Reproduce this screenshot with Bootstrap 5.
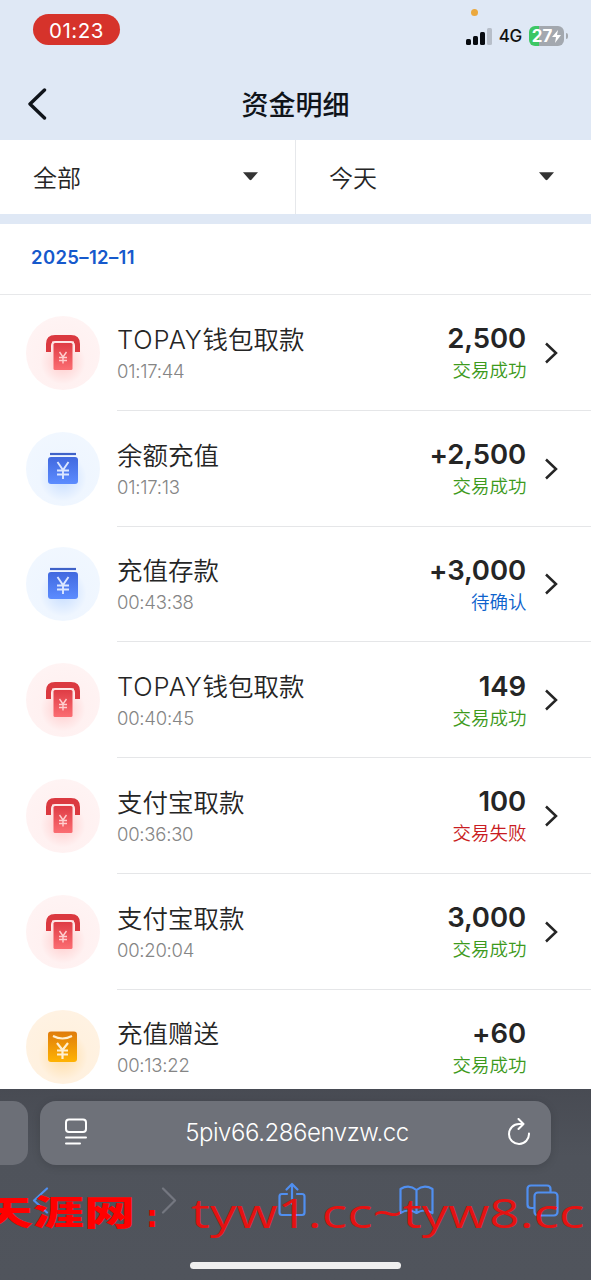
<!DOCTYPE html>
<html lang="zh-CN">
<head>
<meta charset="utf-8">
<meta name="viewport" content="width=device-width, initial-scale=1">
<title>资金明细</title>
<link href="https://cdn.jsdelivr.net/npm/bootstrap@5.3.0/dist/css/bootstrap.min.css" rel="stylesheet">
<style>
body{font-family:Inter,"Noto Sans CJK SC",sans-serif;color:#252525;background:#fff;line-height:1}
.screen{width:591px;height:1280px}
.tinted{background:#dfe8f5}
.statusbar{height:69px;padding:14px 23px 0 33px}
.clock{width:87px;height:31px;background:#d6332b;font-size:20.5px;line-height:33px;letter-spacing:.5px;color:#fff}
.signal-area{padding-top:12px;gap:7px}
.network{font-size:17px;font-weight:500;color:#111;letter-spacing:-.3px}
.battery{width:35px;height:20px;border-radius:6px;background:linear-gradient(90deg,#3dc764 10px,#a3a8af 10px);font-size:17px;color:#fff}
.battery-tip{width:2px;height:6px;background:#a3a8af;margin-left:-5px}
.privacy-dot{width:7px;height:7px;background:#eba83d;left:471px;top:9px}
.titlebar{height:71px}
.titlebar h1{font-size:27px;font-weight:500;color:#10141a;padding-top:3px}
.back{left:26px;top:19px}
.filters{height:74px;font-size:24px;font-weight:350}
.filter{padding:3px 37px 0 33px;width:295px}
.filter span{padding-top:1px}
.filter svg{margin-top:-4px}
.filter+.filter{border-left:1px solid #e6e8eb;width:296px}
.gapline{height:10px}
.day{height:71px;padding:0 31px 3px;font-size:18.5px;font-weight:600;letter-spacing:.35px;color:#1659cc;border-bottom:1px solid #e7e8ea}
.list-area{height:794px}
.record{height:115.75px;padding-left:26px}
.disc{width:74px;height:74px;margin-right:17px}
.disc-red{background:radial-gradient(circle at 50% 62%,#ffcaca 0,#fff1f1 38%,#fff5f5 100%)}
.disc-blue{background:radial-gradient(circle at 50% 62%,#c5dcff 0,#eff6ff 40%,#f2f8ff 100%)}
.disc-gold{background:radial-gradient(circle at 50% 62%,#ffdca4 0,#fff1df 42%,#fff3e5 100%)}
.record-line{height:100%;border-bottom:1px solid #e5e6e8;padding-right:32px}
.name{font-size:25.5px;line-height:30px;font-weight:350;padding-top:2px}
.name .latin{letter-spacing:.9px;margin-right:-.3px}
.time{font-size:18.5px;line-height:22px;color:#858585;font-weight:350;letter-spacing:-.25px;margin-top:5px}
.amount{font-size:27.5px;line-height:30px;font-weight:600;letter-spacing:-.1px}
.state{font-size:18.5px;line-height:22px;font-weight:350;margin-top:6px;margin-right:-.5px}
.ok{color:#3d9a1c}.wait{color:#0d62cc}.fail{color:#c91c22}
.arrow{margin-left:18px;margin-top:1px}
.browser{height:192px;background:linear-gradient(#484b53,#4f535b 35%,#50545c)}
.urlrow{padding-top:12px;gap:12px}
.tab-prev{width:28px;height:64px;background:#6c6f77;border-radius:0 15px 15px 0}
.urlbox{width:511px;height:64px;background:#6e7179;border-radius:16px;padding:0 20px 0 25px;color:#fff;font-size:24px;box-shadow:0 2px 8px #0002}
.urlbox svg{margin-top:-2px}
.url{letter-spacing:-.45px;font-weight:350}
.toolbar{height:72px;padding:0 32px 2px 31px}
.toolbar svg{flex:none}
.tool-forward{margin-left:111px}
.tool-book{margin-left:93px}
.tool-tabs{margin-left:92px}
.home{width:211px;height:7px;background:#efefef;margin-top:25px}
.stamp{color:#f00;white-space:nowrap;transform-origin:0 0}
.stamp-cn{left:-18px;top:102px;font:900 34px/40px "Noto Sans CJK SC",sans-serif;transform:scaleX(1.5)}
.stamp-dots{left:146px;top:108px;font:700 30px/40px "DejaVu Sans",sans-serif}
.stamp-en{left:191px;top:99px;font:400 40px/50px "Open Sans","Noto Sans",sans-serif;color:#e51212;transform:scaleX(1.325)}
</style>
</head>
<body>
<svg width="0" height="0" class="position-absolute" aria-hidden="true">
<defs>
<linearGradient id="gr" x1="0" y1="0" x2="0" y2="1"><stop stop-color="#df3c45"/><stop offset="1" stop-color="#fb6d72"/></linearGradient>
<linearGradient id="gb" x1="0" y1="0" x2="0" y2="1"><stop stop-color="#4169df"/><stop offset="1" stop-color="#5c8cff"/></linearGradient>
<linearGradient id="gg" x1="0" y1="0" x2="0" y2="1"><stop stop-color="#df7c0c"/><stop offset="1" stop-color="#ffb303"/></linearGradient>
</defs>
<symbol id="withdraw" viewBox="0 0 74 74">
<path d="M20 36v-8q0-9 9-9h16q9 0 9 9v8h-5v-6q0-5-5-5H30q-5 0-5 5v6z" fill="#db3940"/>
<rect x="26" y="25.500" width="22" height="12" fill="#fde3e3"/>
<rect x="27.500" y="27" width="19" height="27" rx="1.500" fill="url(#gr)"/>
<path d="M33.500 36l3.500 5 3.500-5M37 41v6.500M33 41.500h8M33 44.500h8" fill="none" stroke="#ffd0d0" stroke-width="1.400"/>
</symbol>
<symbol id="deposit" viewBox="0 0 74 74">
<path d="M24 22h26" stroke="#3f62c8" stroke-width="2.200"/>
<rect x="22" y="25" width="30" height="27" rx="3" fill="url(#gb)"/>
<path d="M31.500 30l5.500 8 5.500-8M37 38v9M31 38.500h12M31 42.500h12" fill="none" stroke="#dce7ff" stroke-width="1.900"/>
</symbol>
<symbol id="bonus" viewBox="0 0 74 74">
<rect x="22" y="21.500" width="29" height="30.500" rx="3" fill="url(#gg)"/>
<path d="M27 26q9.500 5 19 0" fill="none" stroke="#fff0d2" stroke-width="2"/>
<path d="M31 33l5.500 7 5.500-7M36.500 40v9M31 40.500h11M31 44.500h11" fill="none" stroke="#fff0d2" stroke-width="2.200"/>
</symbol>
<symbol id="chev" viewBox="0 0 15 22"><path d="M2 1.500l10 9.500L2 20.500" fill="none" stroke="#252525" stroke-width="2.500"/></symbol>
<symbol id="caret" viewBox="0 0 16 9"><path d="M0 0h16L9 8q-1 1-2 0z" fill="#333"/></symbol>
</svg>

<main class="screen position-relative overflow-hidden">
<header class="tinted position-relative">
  <div class="statusbar d-flex justify-content-between align-items-start">
    <div class="clock rounded-pill text-center">01:23</div>
    <div class="signal-area d-flex align-items-center">
      <svg width="26" height="17"><g fill="#080b10"><rect y="11" width="5" height="6" rx="1.500"/><rect x="7" y="8" width="5" height="9" rx="1.500"/><rect x="14" y="4" width="5" height="13" rx="1.500"/></g><rect x="21" width="5" height="17" rx="1.500" fill="#b7bec9"/></svg>
      <span class="network">4G</span>
      <div class="battery d-flex align-items-center justify-content-center fw-bold">27<svg width="9" height="13" viewBox="0 0 9 13"><path d="M6 0L0 7h4l-1 6 6-8H5z" fill="#fff"/></svg></div>
      <i class="battery-tip rounded-end"></i>
    </div>
  </div>
  <span class="privacy-dot rounded-circle position-absolute"></span>
  <div class="titlebar position-relative d-flex align-items-center justify-content-center">
    <svg class="back position-absolute" width="22" height="32"><path d="M18.500 2L4 16l14.500 14" fill="none" stroke="#10141a" stroke-width="3.400" stroke-linecap="round" stroke-linejoin="round"/></svg>
    <h1 class="m-0">资金明细</h1>
  </div>
</header>
<nav class="filters d-flex">
  <div class="filter d-flex align-items-center justify-content-between"><span>全部</span><svg width="15" height="9"><use href="#caret"/></svg></div>
  <div class="filter d-flex align-items-center justify-content-between"><span>今天</span><svg width="15" height="9"><use href="#caret"/></svg></div>
</nav>
<div class="gapline tinted"></div>
<div class="day d-flex align-items-center">2025–12–11</div>
<section class="list-area overflow-hidden">
  <article class="record d-flex align-items-center"><div class="disc disc-red rounded-circle flex-shrink-0"><svg width="74" height="74"><use href="#withdraw"/></svg></div><div class="record-line d-flex align-items-center flex-grow-1"><div class="flex-grow-1"><div class="name"><span class="latin">TOPAY</span>钱包取款</div><div class="time">01:17:44</div></div><div class="text-end"><div class="amount">2,500</div><div class="state ok">交易成功</div></div><svg class="arrow" width="15" height="22"><use href="#chev"/></svg></div></article>
  <article class="record d-flex align-items-center"><div class="disc disc-blue rounded-circle flex-shrink-0"><svg width="74" height="74"><use href="#deposit"/></svg></div><div class="record-line d-flex align-items-center flex-grow-1"><div class="flex-grow-1"><div class="name">余额充值</div><div class="time">01:17:13</div></div><div class="text-end"><div class="amount">+2,500</div><div class="state ok">交易成功</div></div><svg class="arrow" width="15" height="22"><use href="#chev"/></svg></div></article>
  <article class="record d-flex align-items-center"><div class="disc disc-blue rounded-circle flex-shrink-0"><svg width="74" height="74"><use href="#deposit"/></svg></div><div class="record-line d-flex align-items-center flex-grow-1"><div class="flex-grow-1"><div class="name">充值存款</div><div class="time">00:43:38</div></div><div class="text-end"><div class="amount">+3,000</div><div class="state wait">待确认</div></div><svg class="arrow" width="15" height="22"><use href="#chev"/></svg></div></article>
  <article class="record d-flex align-items-center"><div class="disc disc-red rounded-circle flex-shrink-0"><svg width="74" height="74"><use href="#withdraw"/></svg></div><div class="record-line d-flex align-items-center flex-grow-1"><div class="flex-grow-1"><div class="name"><span class="latin">TOPAY</span>钱包取款</div><div class="time">00:40:45</div></div><div class="text-end"><div class="amount">149</div><div class="state ok">交易成功</div></div><svg class="arrow" width="15" height="22"><use href="#chev"/></svg></div></article>
  <article class="record d-flex align-items-center"><div class="disc disc-red rounded-circle flex-shrink-0"><svg width="74" height="74"><use href="#withdraw"/></svg></div><div class="record-line d-flex align-items-center flex-grow-1"><div class="flex-grow-1"><div class="name">支付宝取款</div><div class="time">00:36:30</div></div><div class="text-end"><div class="amount">100</div><div class="state fail">交易失败</div></div><svg class="arrow" width="15" height="22"><use href="#chev"/></svg></div></article>
  <article class="record d-flex align-items-center"><div class="disc disc-red rounded-circle flex-shrink-0"><svg width="74" height="74"><use href="#withdraw"/></svg></div><div class="record-line d-flex align-items-center flex-grow-1"><div class="flex-grow-1"><div class="name">支付宝取款</div><div class="time">00:20:04</div></div><div class="text-end"><div class="amount">3,000</div><div class="state ok">交易成功</div></div><svg class="arrow" width="15" height="22"><use href="#chev"/></svg></div></article>
  <article class="record d-flex align-items-center"><div class="disc disc-gold rounded-circle flex-shrink-0"><svg width="74" height="74"><use href="#bonus"/></svg></div><div class="record-line d-flex align-items-center flex-grow-1"><div class="flex-grow-1"><div class="name">充值赠送</div><div class="time">00:13:22</div></div><div class="text-end"><div class="amount">+60</div><div class="state ok">交易成功</div></div><svg class="arrow invisible" width="15" height="22"><use href="#chev"/></svg></div></article>
</section>
<footer class="browser position-relative">
  <div class="urlrow d-flex">
    <div class="tab-prev"></div>
    <div class="urlbox d-flex align-items-center justify-content-between">
      <svg width="22" height="28" fill="none" stroke="#fff" stroke-width="2" stroke-linecap="round"><rect x="1" y="1.500" width="20" height="12.500" rx="3"/><path d="M1 19.500h20M1 25.500h14"/></svg>
      <span class="url">5piv66.286envzw.cc</span>
      <svg width="24" height="28" fill="none" stroke="#fff" stroke-width="2" stroke-linecap="round" stroke-linejoin="round"><path d="M22 15.500a10 10 0 1 1-10-9.500h4M11.500 1l5 5-5 5"/></svg>
    </div>
  </div>
  <div class="toolbar d-flex align-items-center">
    <svg width="18" height="27"><path d="M16 1.500L3 13.500l13 12" fill="none" stroke="#508ff0" stroke-width="2.200" stroke-linecap="round" stroke-linejoin="round"/></svg>
    <svg class="tool-forward" width="18" height="27"><path d="M3 1.500l12 12-12 12" fill="none" stroke="#747780" stroke-width="2.200" stroke-linecap="round" stroke-linejoin="round"/></svg>
    <svg class="ms-auto" width="28" height="36" fill="none" stroke="#508ff0" stroke-width="2.200" stroke-linecap="round" stroke-linejoin="round"><path d="M9 12H4q-2.500 0-2.500 2.500v16Q1.500 33 4 33h20q2.500 0 2.500-2.500v-16Q26.500 12 24 12h-5M14 22V2M8.500 7.500L14 2l5.500 5.500"/></svg>
    <svg class="tool-book" width="35" height="30" fill="none" stroke="#508ff0" stroke-width="2.200" stroke-linejoin="round"><path d="M17.500 5Q10-1 1.500 4v24q8-5 16 0 8-5 16 0V4Q25-1 17.500 5v23"/></svg>
    <svg class="tool-tabs" width="33" height="33" fill="none" stroke="#508ff0" stroke-width="2.200"><path d="M8.500 24H5q-3.500 0-3.500-3.500V5Q1.500 1.500 5 1.500h16q3.500 0 3.500 3.500v3.500"/><rect x="8.500" y="8.500" width="23" height="23" rx="3.500"/></svg>
  </div>
  <div class="home rounded-pill mx-auto"></div>
  <div class="stamp stamp-cn position-absolute">天涯网</div>
  <div class="stamp stamp-dots position-absolute">:</div>
  <div class="stamp stamp-en position-absolute">tyw1.cc~tyw8.cc</div>
</footer>
</main>
<script src="https://cdn.jsdelivr.net/npm/bootstrap@5.3.0/dist/js/bootstrap.bundle.min.js"></script>
</body>
</html>
